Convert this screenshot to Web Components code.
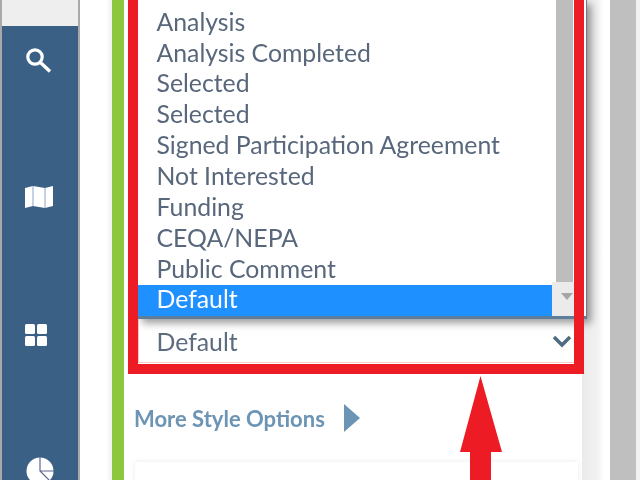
<!DOCTYPE html>
<html>
<head>
<meta charset="utf-8">
<style>
html,body{margin:0;padding:0;height:480px;overflow:hidden;background:#fff}
body{font-family:"Lato","Liberation Sans",sans-serif}
</style>
</head>
<body>
<app-screen>
    <side-rail slot="rail">
        <svg slot="search" style="margin-left:23px" width="28" height="28" viewBox="0 0 28 28"><circle cx="10" cy="11" r="7.200" fill="none" stroke="#fff" stroke-width="3.200"/><path d="M15.500 16.500l9.500 9" stroke="#fff" stroke-width="3.400" fill="none"/></svg>
        <svg slot="map" style="margin-left:23px" width="30" height="24" viewBox="0 0 30 24"><path d="M0 3l8-2 12 2 8-2v20l-8 2-12-2-8 2z" fill="#fff"/><path d="M8 1v20M20 3v20" stroke="#9db5cd" stroke-width="1.200" fill="none"/></svg>
        <svg slot="grid" style="margin-left:22px" width="24" height="24" viewBox="0 0 24 24"><rect x="1" y="1" width="10" height="10" rx="1.500" fill="#fff"/><rect x="13" y="1" width="10" height="10" rx="1.500" fill="#fff"/><rect x="1" y="13" width="10" height="10" rx="1.500" fill="#fff"/><rect x="13" y="13" width="10" height="10" rx="1.500" fill="#fff"/></svg>
        <svg slot="chart" style="margin-left:24px;margin-top:-4px" width="28" height="28" viewBox="0 0 28 28"><circle cx="14" cy="14" r="13.500" fill="#fff"/><path d="M14 0V14L24 24M14 14H28" stroke="#5f6690" stroke-width="1.200" fill="none"/></svg>
    </side-rail>
    <style-panel slot="panel">
        <marked-field>
            <drop-list slot="list">
                <list-row>Analysis</list-row>
                <list-row>Analysis Completed</list-row>
                <list-row>Selected</list-row>
                <list-row>Selected</list-row>
                <list-row>Signed Participation Agreement</list-row>
                <list-row>Not Interested</list-row>
                <list-row>Funding</list-row>
                <list-row>CEQA/NEPA</list-row>
                <list-row>Public Comment</list-row>
                <list-row selected>Default</list-row>
            </drop-list>
            <select-box slot="select">Default</select-box>
        </marked-field>
        <more-link>More Style Options</more-link>
    </style-panel>
</app-screen>
<script>
class AppScreen extends HTMLElement{
    constructor(){
        super()
        this.attachShadow({ mode: "open" });
        this.shadowRoot.innerHTML = `
            <style>
                :host{display:flex;width:640px;height:480px;overflow:hidden;position:relative;filter:blur(.45px)}
                .gap{width:32px;flex:none;background:linear-gradient(90deg,#fff 0,#fff 26px,#f0f0f0 32px)}
                .stripe{width:12px;flex:none;background:#8dc63f}
                .shade{width:28px;flex:none;background:linear-gradient(90deg,#eaeaea,#f2f2f2 16px,#fff 22px)}
                .track{width:26px;flex:none;background:#bfbfbf}
                .edge{width:4px;flex:none;background:#f1f1f1}
                svg{position:absolute;left:460px;top:376px}
            </style>
            <slot name="rail"></slot>
            <div class="gap"></div>
            <div class="stripe"></div>
            <slot name="panel"></slot>
            <div class="shade"></div>
            <div class="track"></div>
            <div class="edge"></div>
            <svg width="42" height="104" viewBox="0 0 42 104"><path d="M20.500 0L42 76H31V104H10V76H0z" fill="#ed1c24"/></svg>
        `;
    }
}
class SideRail extends HTMLElement{
    constructor(){
        super()
        this.attachShadow({ mode: "open" });
        this.shadowRoot.innerHTML = `
            <style>
                :host{display:flex;flex-direction:column;flex:none;width:76px;height:480px;border-left:2px solid #a9a9a9;border-right:2px solid #a9a9a9;background:#3b6086}
                .top{height:26px;background:#eeeeee;flex:none}
                .cell{height:138px;flex:none;display:flex;align-items:center}
                .cell.first{height:82px;padding-top:20px;align-items:flex-start}
            </style>
            <div class="top"></div>
            <div class="cell first"><slot name="search"></slot></div>
            <div class="cell"><slot name="map"></slot></div>
            <div class="cell"><slot name="grid"></slot></div>
            <div class="cell"><slot name="chart"></slot></div>
        `;
    }
}
class StylePanel extends HTMLElement{
    constructor(){
        super()
        this.attachShadow({ mode: "open" });
        this.shadowRoot.innerHTML = `
            <style>
                :host{display:flex;flex-direction:column;flex:none;width:458px;height:480px;padding-left:4px;box-sizing:border-box;background:#fff}
                ::slotted(*){flex:none}
                .card{flex:none;margin:27px 0 0 7px;width:443px;height:60px;box-shadow:0 0 6px rgba(0,0,0,.08);background:#fff}
            </style>
            <slot></slot>
            <div class="card"></div>
        `;
    }
}
class MarkedField extends HTMLElement{
    constructor(){
        super()
        this.attachShadow({ mode: "open" });
        this.shadowRoot.innerHTML = `
            <style>
                :host{display:block;position:relative;width:456px;height:374px;background:#fff}
                .frame{position:absolute;inset:0;box-sizing:border-box;border:10px solid #ed1c24;border-top:0}
            </style>
            <slot name="select"></slot>
            <slot name="list"></slot>
            <div class="frame"></div>
        `;
    }
}
class DropList extends HTMLElement{
    constructor(){
        super()
        this.attachShadow({ mode: "open" });
        this.shadowRoot.innerHTML = `
            <style>
                :host{display:block;position:absolute;left:10px;top:0;width:449px;height:319px;box-sizing:border-box;border-right:1px solid #6f7a7a;border-bottom:3px solid #5d7f9c;box-shadow:4px 4px 8px rgba(0,0,0,.4);background:#fff}
                .rows{padding-top:7.75px;width:414px}
                .bar{position:absolute;left:418px;top:0;width:17px;height:282px;background:#bdbdbd}
                .btn{position:absolute;left:414px;top:282px;width:22px;height:34px;background:#ebebeb}
                .btn:after{content:"";position:absolute;left:9px;top:11px;border:6px solid transparent;border-top:7px solid #a6a6a6;border-bottom:0}
            </style>
            <div class="rows"><slot></slot></div>
            <div class="bar"></div>
            <div class="btn"></div>
        `;
    }
}
class ListRow extends HTMLElement{
    constructor(){
        super()
        this.attachShadow({ mode: "open" });
        this.shadowRoot.innerHTML = `
            <style>
                :host{display:block;height:30.85px;line-height:27px;padding-left:18.500px;font-size:24.800px;color:#58677b;white-space:nowrap}
                :host([selected]){background:#1e90ff;color:#fff}
            </style>
            <slot></slot>
        `;
    }
}
class SelectBox extends HTMLElement{
    constructor(){
        super()
        this.attachShadow({ mode: "open" });
        this.shadowRoot.innerHTML = `
            <style>
                :host{display:flex;position:absolute;left:10px;right:10px;top:319px;height:44px;box-sizing:border-box;padding-left:18.500px;justify-content:space-between;align-items:center;font-size:24.800px;color:#5c6b7e;box-shadow:inset 0 -1px 0 #f8c9c9,inset 1px 0 0 #f8c9c9}
                svg{margin-right:2px}
            </style>
            <slot></slot>
            <svg width="20" height="14" viewBox="0 0 20 14"><path d="M2 3l8 8 8-8" fill="none" stroke="#4f6b80" stroke-width="3.500"/></svg>
        `;
    }
}
class MoreLink extends HTMLElement{
    constructor(){
        super()
        this.attachShadow({ mode: "open" });
        this.shadowRoot.innerHTML = `
            <style>
                :host{display:flex;align-items:center;gap:19px;margin:27px 0 0 6px;height:34px;font-size:22px;font-weight:700;color:#6b94b5}
            </style>
            <slot></slot>
            <svg width="16" height="28" viewBox="0 0 16 28"><path d="M0 0l16 14L0 28z" fill="#6b94b5"/></svg>
        `;
    }
}
customElements.define("app-screen", AppScreen);
customElements.define("side-rail", SideRail);
customElements.define("style-panel", StylePanel);
customElements.define("marked-field", MarkedField);
customElements.define("drop-list", DropList);
customElements.define("list-row", ListRow);
customElements.define("select-box", SelectBox);
customElements.define("more-link", MoreLink);
</script>
</body>
</html>
